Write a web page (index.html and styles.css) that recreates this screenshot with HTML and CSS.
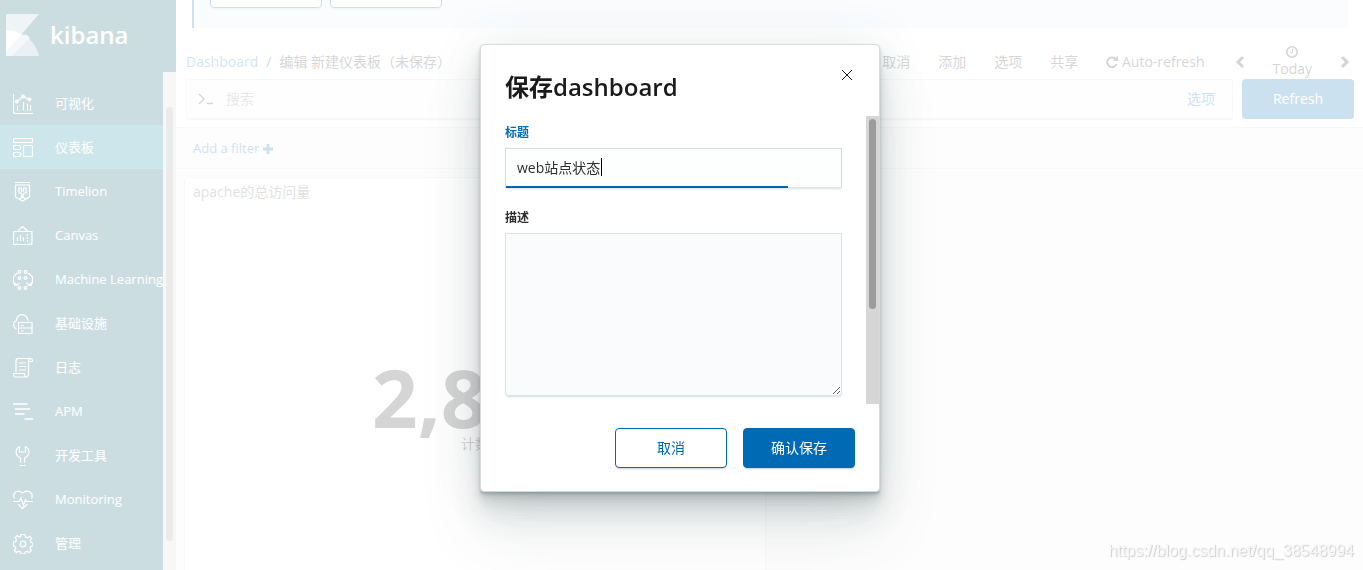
FILE: index.html
```html
<!DOCTYPE html>
<html lang="zh-CN">
<head>
    <meta charset="UTF-8">
    <meta name="viewport" content="width=device-width, initial-scale=1.0">
    <title>Kibana</title>
    <link rel="stylesheet" href="styles.css">
</head>
<body>
    <div class="app">
        <!-- 左侧导航 -->
        <aside class="sidebar">
            <a class="logo" href="#">
                <svg width="33" height="42" viewBox="0 0 33 42">
                    <path fill="#afc8d7" d="M0 0h33L0 38z"/>
                    <path fill="#96b9ca" d="M0 16c17 0 29 11 33 26H0z"/>
                    <path fill="#c8dce5" d="M14 22L20 20.500C22 22 23 23 24 24L6 42H0v-4z"/>
                    <path fill="#ffffff" d="M0 16c6 0 11 1.500 15.500 4.200L0 38z"/>
                </svg>
                <span>kibana</span>
            </a>
            <div class="nav-wrap">
                <nav class="nav">
                    <a href="#">
                        <svg viewBox="0 0 20 20"><path d="M.5 0v17.500q0 2 2 2H20M4.500 12v4.500M10.500 8v8.500M14.500 10v6.500M17.500 11v5.500M4 7.500L10 2.500L17 6"/><circle class="dot" cx="4" cy="7.500" r="2"/><circle class="dot" cx="10" cy="2.500" r="2"/><circle class="dot" cx="16.500" cy="5.500" r="2"/></svg>
                        <span>可视化</span>
                    </a>
                    <a class="active" href="#">
                        <svg viewBox="0 0 20 20"><rect x=".5" y=".5" width="19" height="4" rx="1"/><rect x=".5" y="7.500" width="7" height="4" rx="1"/><rect x=".5" y="14.500" width="7" height="4" rx="1"/><rect x="10.500" y="7.500" width="9" height="11" rx="1"/></svg>
                        <span>仪表板</span>
                    </a>
                    <a href="#">
                        <svg viewBox="0 0 20 20"><path d="M2 .5h15M2.500 3v12L9.500 19l7-4V3zM6 6v5h2l1.500 4 1.500-4h2V6M5 6h3.500v3h2V6H14M7 17l2.500-3 2.500 3"/></svg>
                        <span>Timelion</span>
                    </a>
                    <a href="#">
                        <svg viewBox="0 0 20 20"><path d="M1 5.500h18v1l-.5 1 .5 1v7l-.5 1 .5 2h-2l-1-.5-1 .5h-10l-1-.5-1 .5H.5v-2l.5-1-.5-1v-7l.5-1zM5 5l4.500-4.500L14.500 5M4.500 11v4M7.500 9v6M10.500 11v4"/><path stroke-dasharray="2 1" d="M14.500 8v8"/></svg>
                        <span>Canvas</span>
                    </a>
                    <a href="#">
                        <svg viewBox="0 0 20 20"><path d="M5 3.500H3.500L.5 7v5.500L4.500 15l2-2.500M14.500 3.500H16L19.500 7v5.500L15.500 15l-2-2.500M1 13l1 2.500h2M19 13l-1 2.500h-2"/><circle cx="6.500" cy="1.800" r="1.300"/><circle cx="12.500" cy="1.800" r="1.300"/><circle cx="6.500" cy="8" r="1.300"/><circle cx="12.500" cy="8" r="1.300"/><circle cx="6.500" cy="18" r="1.300"/><circle cx="12.500" cy="18" r="1.300"/></svg>
                        <span>Machine Learning</span>
                    </a>
                    <a href="#">
                        <svg viewBox="0 0 20 20"><path d="M3.500 15C-.5 13.500-.5 7.500 3.500 6.500C4-1 13-1.500 15 6.500M5.500 8.500h13.500v11H5.500zM5.500 14h13.500M8 11.500h3M8 17h3"/></svg>
                        <span>基础设施</span>
                    </a>
                    <a href="#">
                        <svg viewBox="0 0 20 20"><path d="M3 14V3Q3 .5 5 .5h12.500q2 0 2 3h-4V16q0 3-2.500 3H2Q.5 19 .5 15.500h11q0 3.500 2 3.500M15.500 3.500q0-3 2-3M6 5h7M6 8.500h7M6 12h7"/></svg>
                        <span>日志</span>
                    </a>
                    <a href="#">
                        <svg viewBox="0 0 20 20"><path stroke-width="1.500" d="M0 2h14.500M2 7h15M2 12h9.500M11.500 17H20"/></svg>
                        <span>APM</span>
                    </a>
                    <a href="#">
                        <svg viewBox="0 0 20 20"><path d="M7.500 16.500v-4.500C1.500 9.500 2 2.500 6.500.8V6h6V.8c4.500 1.700 5 8.700-1 11.200v4.500M6.500 19.500h6"/></svg>
                        <span>开发工具</span>
                    </a>
                    <a href="#">
                        <svg viewBox="0 0 20 20"><path d="M1.500 8.500C-1 3 4.500-1.500 9.500 3C15-1.500 21 3 18.500 8.500M0 11.500h6l2-3.500 2.500 7 2-5 1 1.500H20M5 14l4.500 4.500L14.500 14"/></svg>
                        <span>Monitoring</span>
                    </a>
                    <a href="#">
                        <svg viewBox="0 0 20 20"><path d="M8 .5h4l.5 2.500 2 .8 2.200-1.500 2 2.200-1.500 2.200.8 1.800 2 .5v3l-2.300.5-.7 2 1.400 2-2.200 2.200-2-1.400-2 .9-.5 2H8l-.5-2.200-2-.8-2 1.400L1.400 16.400l1.400-2L2 12.500l-1.500-.5V8L2.700 7.500l.8-2L2.200 3.600l2-2L6.200 3l1.500-.5z"/><circle cx="10" cy="10" r="2.800"/></svg>
                        <span>管理</span>
                    </a>
                </nav>
                <div class="nav-scroll"><div class="nav-thumb"></div></div>
            </div>
        </aside>

        <!-- 仪表板内容 -->
        <main class="main">
            <div class="callout">
                <button class="btn" type="button" aria-label="是"></button>
                <button class="btn" type="button" aria-label="否"></button>
            </div>
            <header class="topnav">
                <div class="crumbs">
                    <a href="#">Dashboard</a><span class="slash">/</span><span>编辑 新建仪表板（未保存）</span>
                </div>
                <div class="menu">
                    <a href="#">取消</a>
                    <a href="#">添加</a>
                    <a href="#">选项</a>
                    <a href="#">共享</a>
                    <a href="#" class="auto">
                        <svg width="12" height="12" viewBox="0 0 12 12"><path fill="none" stroke="currentColor" stroke-width="2" d="M9.700 3A4.800 4.800 0 1 0 10.600 8"/><path fill="currentColor" d="M12 0v5H7z"/></svg>
                        Auto-refresh
                    </a>
                </div>
                <div class="time">
                    <button type="button" aria-label="向前"><svg width="10" height="14" viewBox="0 0 10 14"><path fill="none" stroke="currentColor" stroke-width="3" d="M8 2L3 7l5 5"/></svg></button>
                    <a class="today" href="#">
                        <svg width="12" height="12" viewBox="0 0 12 12"><circle cx="6" cy="6" r="5.200" fill="none" stroke="currentColor" stroke-width="1.600"/><path fill="none" stroke="currentColor" d="M6.500 3v3.500H4"/></svg>
                        <span>Today</span>
                    </a>
                    <button type="button" aria-label="向后"><svg width="10" height="14" viewBox="0 0 10 14"><path fill="none" stroke="currentColor" stroke-width="3" d="M2 2l5 5-5 5"/></svg></button>
                </div>
            </header>
            <form class="query">
                <div class="search">
                    <svg width="16" height="12" viewBox="0 0 16 12"><path fill="none" stroke="currentColor" stroke-width="1.300" d="M1 1l5 5-5 5M9 10.500h6"/></svg>
                    <input type="text" placeholder="搜索" aria-label="搜索">
                    <a href="#">选项</a>
                </div>
                <button class="refresh" type="button">Refresh</button>
            </form>
            <div class="filters">
                <a href="#">Add a filter <svg width="10" height="10" viewBox="0 0 10 10"><path fill="currentColor" d="M3.500 0h3v3.500H10v3H6.500V10h-3V6.500H0v-3h3.500z"/></svg></a>
            </div>
            <div class="grid">
                <section class="panel">
                    <h2>apache的总访问量</h2>
                    <div class="metric">
                        <strong>2,800</strong>
                        <span>计数</span>
                    </div>
                </section>
            </div>
        </main>
    </div>

    <!-- 保存弹窗 -->
    <div class="mask">
        <div class="modal" role="dialog" aria-labelledby="modalTitle">
            <button class="close" type="button" aria-label="关闭"><svg width="12" height="12" viewBox="0 0 12 12"><path fill="none" stroke="currentColor" d="M1 1l10 10M11 1L1 11"/></svg></button>
            <h1 id="modalTitle">保存dashboard</h1>
            <div class="modal-body">
                <div class="fields">
                    <label class="focus" for="title">标题</label>
                    <div class="field">
                        <input id="title" type="text" value="web站点状态">
                        <i class="caret"></i>
                    </div>
                    <label for="desc">描述</label>
                    <textarea id="desc"></textarea>
                </div>
                <div class="modal-scroll"><div class="modal-thumb"></div></div>
            </div>
            <div class="modal-footer">
                <button class="btn" type="button">取消</button>
                <button class="btn fill" type="button">确认保存</button>
            </div>
        </div>
    </div>
    <div class="watermark">https://blog.csdn.net/qq_38548994</div>
</body>
</html>
```
FILE: styles.css
```css
*{
    box-sizing: border-box;
}
body{
    margin: 0;
    font-family: "Open Sans", "Noto Sans CJK SC", sans-serif;
    font-size: 14px;
    line-height: 20px;
    color: #2d2d2d;
    overflow: hidden;
}
a{
    color: #006bb4;
    text-decoration: none;
}
button, input, textarea{
    font: inherit;
}
button{
    cursor: pointer;
}
.app{
    display: flex;
    height: 100vh;
    overflow: hidden;
}

/* 左侧导航 */
.sidebar{
    width: 176px;
    flex: none;
    display: flex;
    flex-direction: column;
    background: #005571;
}
.logo{
    flex: none;
    height: 72px;
    padding: 0 0 2px 6px;
    display: flex;
    align-items: center;
    gap: 11px;
    color: #fff;
    font-size: 24px;
    font-weight: 600;
}
.nav-wrap{
    flex: 1;
    min-height: 0;
    display: flex;
}
.nav{
    flex: 1;
    padding-top: 9px;
    overflow: hidden;
}
.nav a{
    height: 44px;
    padding-left: 13px;
    display: flex;
    align-items: center;
    gap: 22px;
    color: #fff;
    font-size: 13px;
    white-space: nowrap;
}
.nav a.active{
    background: #0080a0;
}
.nav svg{
    width: 20px;
    height: 20px;
    flex: none;
    margin-top: 2px;
    fill: none;
    stroke: #fff;
    stroke-width: 1.2;
}
.nav .dot{
    fill: #fff;
    stroke: none;
}
.nav-scroll{
    width: 13px;
    padding: 35px 3px 29px;
    background: #d8d8d8;
}
.nav-thumb{
    height: 100%;
    border-radius: 4px;
    background: #999;
}

/* 内容 */
.main{
    flex: 1;
    min-width: 0;
    display: flex;
    flex-direction: column;
}
.callout{
    flex: none;
    display: flex;
    gap: 8px;
    margin: -32px 15px 0 16px;
    padding: 0 16px 20px;
    border-left: 2px solid #006bb4;
    background: #e6f0f8;
}
.btn{
    width: 112px;
    height: 40px;
    padding: 0;
    border: 1px solid #006bb4;
    border-radius: 4px;
    background: #fff;
    color: #006bb4;
    box-shadow: 0 2px 2px -1px rgba(54,97,126,.3);
}
.fill{
    background: #006bb4;
    color: #fff;
}
.topnav{
    display: flex;
    flex: none;
    align-items: center;
    padding: 16px 13px 0 10px;
    height: 51px;
}
.topnav a{
    color: #2d2d2d;
}
.topnav .crumbs a{
    color: #0079d0;
}
.crumbs{
    flex: 1;
}
.slash{
    margin: 0 8px;
}
.menu{
    display: flex;
    gap: 28px;
}
.auto svg{
    vertical-align: -1px;
}
.time{
    display: flex;
    align-items: center;
    gap: 28px;
    margin-left: 30px;
}
.time button{
    padding: 0;
    border: 0;
    background: none;
    color: #2d2d2d;
    line-height: 0;
}
.today{
    display: flex;
    flex-direction: column;
    align-items: center;
    line-height: 17px;
    gap: 2px;
}
.query{
    flex: none;
    display: flex;
    gap: 9px;
    padding: 0 9px 8px 10px;
}
.search{
    flex: 1;
    height: 40px;
    display: flex;
    align-items: center;
    padding: 0 17px 0 11px;
    border: 1px solid #d9dcdc;
    background: #fbfbfb;
    box-shadow: 0 2px 2px -1px rgba(54,97,126,.3);
}
.search input{
    flex: 1;
    min-width: 0;
    margin-left: 12px;
    padding: 0;
    border: 0;
    background: none;
}
.search input::placeholder{
    color: #888;
}
.refresh{
    width: 112px;
    height: 40px;
    border: 0;
    border-radius: 4px;
    background: #006bb4;
    color: #fff;
}
.filters{
    flex: none;
    padding: 10px 17px;
    border: 1px solid #d9dcdc;
    border-width: 1px 0;
    background: #f5f5f5;
    font-size: 13px;
}
.filters svg{
    vertical-align: -1px;
}
.grid{
    flex: 1;
    display: flex;
    padding: 8px 8px 0;
    background: #f5f5f5;
}
.panel{
    width: 582px;
    height: 440px;
    padding: 4px 8px;
    border: 1px solid #d0dadf;
    border-radius: 4px;
    background: #fff;
}
.panel h2{
    margin: 0;
    font-size: 14px;
    font-weight: 400;
    color: #666;
}
.metric{
    padding-top: 158px;
    display: flex;
    flex-direction: column;
    align-items: center;
}
.metric strong{
    font-size: 80px;
    line-height: 74px;
}

/* 弹窗 */
.mask{
    position: fixed;
    inset: 0;
    display: flex;
    align-items: center;
    justify-content: center;
    padding: 0 3px 6vh 0;
    background: rgba(255,255,255,.8);
}
.modal{
    position: relative;
    width: 400px;
    border: 1px solid #d5dadd;
    border-radius: 4px;
    background: #fff;
    box-shadow: 0 40px 64px 0 rgba(65,78,84,.1), 0 24px 32px 0 rgba(65,84,92,.1), 0 16px 16px 0 rgba(65,84,92,.1), 0 8px 8px 0 rgba(65,84,92,.1), 0 4px 4px 0 rgba(65,84,92,.15), 0 2px 2px 0 rgba(65,84,92,.2), 0 0 50px 0 rgba(65,84,92,.1);
}
.close{
    position: absolute;
    top: 16px;
    right: 18px;
    padding: 8px;
    border: 0;
    background: none;
    color: #1a1a1a;
    line-height: 0;
}
.modal h1{
    margin: 0;
    padding: 24px 24px 11px;
    font-size: 24px;
    line-height: 36px;
    font-weight: 600;
    color: #1a1a1a;
}
.modal-body{
    display: flex;
    height: 288px;
}
.fields{
    flex: 1;
    padding: 8px 24px 0;
}
.fields label{
    display: block;
    margin-bottom: 6px;
    font-size: 12px;
    line-height: 18px;
    font-weight: 700;
}
.fields label.focus{
    color: #006bb4;
}
.field{
    position: relative;
    margin-bottom: 21px;
}
.field input, .fields textarea{
    display: block;
    width: 100%;
    border: 1px solid #d5d9da;
    outline: 0;
    color: #2d2d2d;
    box-shadow: 0 2px 2px -1px rgba(54,97,126,.2);
}
.field input{
    height: 40px;
    padding: 0 11px 2px;
    background: #fdfefe linear-gradient(#006bb4, #006bb4) no-repeat left bottom / 84% 2px;
    background-origin: border-box;
    background-clip: border-box;
    border-bottom-color: rgba(0,0,0,.1);
}
.caret{
    position: absolute;
    left: 96px;
    top: 10px;
    width: 1px;
    height: 18px;
    background: #000;
}
.fields textarea{
    height: 163px;
    border-color: #dfe2e3;
    border-radius: 0 0 3px 3px;
    background: #fafbfd;
    resize: vertical;
}
.modal-scroll{
    width: 13px;
    padding: 3px;
    background: #d6d6d6;
}
.modal-thumb{
    height: 190px;
    border-radius: 4px;
    background: #9b9c9e;
}
.modal-footer{
    display: flex;
    justify-content: flex-end;
    gap: 16px;
    padding: 24px 24px 23px;
}
.watermark{
    position: fixed;
    right: 9px;
    bottom: 9px;
    font-family: "Liberation Sans", sans-serif;
    font-size: 16px;
    color: #f7f7f7;
    text-shadow: 1px 1px 1px #ccc;
}
```
